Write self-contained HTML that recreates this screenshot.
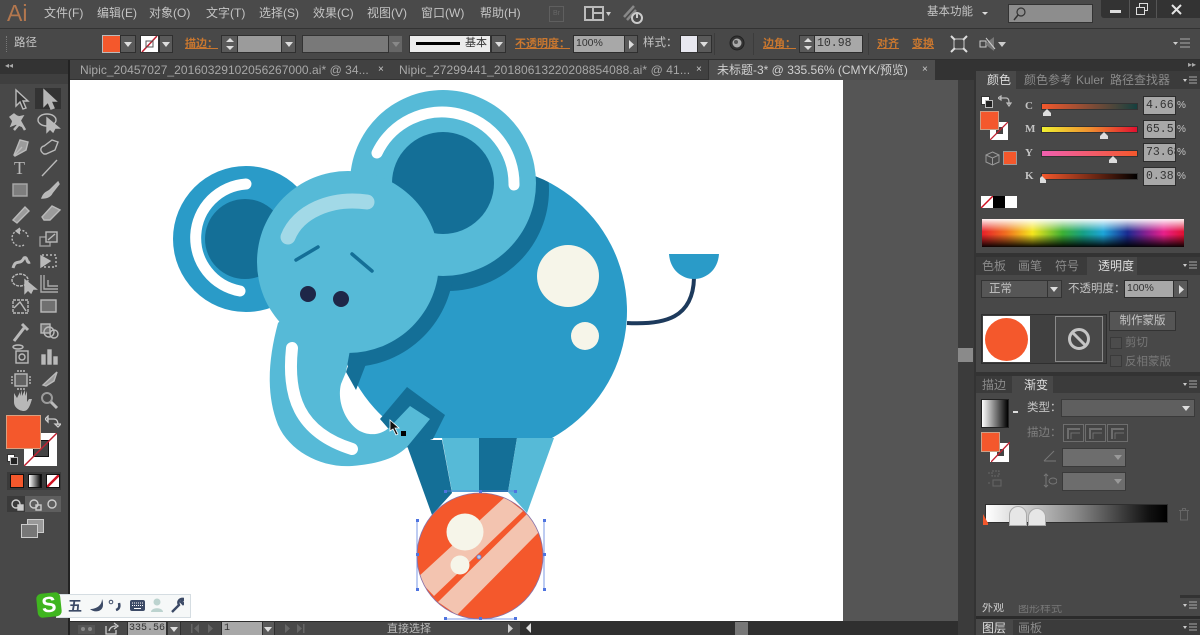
<!DOCTYPE html>
<html lang="zh"><head><meta charset="utf-8"><title>Illustrator</title>
<style>
html,body{margin:0;padding:0;background:#484848}
#p{position:relative;width:1200px;height:635px;overflow:hidden;background:#484848;font-family:"Liberation Sans","Noto Sans CJK SC",sans-serif;color:#c4c4c4;font-size:12px}
#p div,#p span.a,#p svg.a{position:absolute}
.t{white-space:nowrap;line-height:16px}
.o{color:#c9772f;text-decoration:underline;font-weight:bold;font-size:11px}
.f{background:#9b9b9b;box-shadow:0 0 0 1px #2f2f2f}
.b{background:#5a5a5a;box-shadow:0 0 0 1px #2f2f2f}
.n{font-family:"Liberation Mono",monospace;font-size:11.5px;color:#333;background:#a8a8a8;box-shadow:0 0 0 1px #2d2d2d;padding-left:2px;box-sizing:border-box;line-height:17px}
.ar{width:0;height:0;border-left:4px solid transparent;border-right:4px solid transparent;border-top:5px solid #ddd}
</style></head><body><div id="p">

<!-- menu bar -->
<div style="left:0;top:0;width:1200px;height:28px;background:#4a4a4a"></div>
<div style="left:0;top:28px;width:1200px;height:1px;background:#333"></div>
<div class="t" style="left:7px;top:-1px;font-size:23px;line-height:28px;color:#b3774e">Ai</div>
<div class="t" style="left:44px;top:5px">文件(F)</div>
<div class="t" style="left:97px;top:5px">编辑(E)</div>
<div class="t" style="left:149px;top:5px">对象(O)</div>
<div class="t" style="left:206px;top:5px">文字(T)</div>
<div class="t" style="left:259px;top:5px">选择(S)</div>
<div class="t" style="left:313px;top:5px">效果(C)</div>
<div class="t" style="left:367px;top:5px">视图(V)</div>
<div class="t" style="left:421px;top:5px">窗口(W)</div>
<div class="t" style="left:480px;top:5px">帮助(H)</div>
<div style="left:549px;top:6px;width:15px;height:16px;border:1px solid #5f5f5f;box-sizing:border-box;font-size:7px;color:#666;text-align:center;line-height:14px">Br</div>
<svg class="a" style="left:582px;top:4px" width="30" height="20"><rect x="2" y="2" width="20" height="15" fill="#bbb"/><rect x="4" y="4" width="6" height="11" fill="#444"/><rect x="12" y="4" width="8" height="4" fill="#444"/><rect x="12" y="10" width="8" height="5" fill="#444"/><path d="M24 8h5l-2.500 4z" fill="#ccc"/></svg>
<svg class="a" style="left:622px;top:3px" width="24" height="22"><path d="M2 14L12 3M5 17L14 7" stroke="#888" stroke-width="2.500"/><circle cx="15" cy="15" r="5" fill="none" stroke="#ccc" stroke-width="2"/><path d="M15 9v6" stroke="#ccc" stroke-width="2"/></svg>
<div class="t" style="left:927px;top:4px;font-size:11.500px">基本功能</div>
<div class="ar" style="left:982px;top:12px;border-width:3px;border-top-width:3px"></div>
<div style="left:1009px;top:5px;width:83px;height:17px;background:#8d8d8d;box-shadow:0 0 0 1px #333"></div>
<svg class="a" style="left:1012px;top:6px" width="16" height="16"><circle cx="9" cy="6" r="4" fill="none" stroke="#333" stroke-width="1.200"/><path d="M6 9L2 14" stroke="#333" stroke-width="1.500"/></svg>
<div style="left:1101px;top:0;width:99px;height:18px;background:#333;border-radius:0 0 0 3px"></div>
<div style="left:1129px;top:0;width:1px;height:18px;background:#555"></div><div style="left:1156px;top:0;width:1px;height:18px;background:#555"></div>
<div style="left:1110px;top:10px;width:11px;height:3px;background:#ddd"></div>
<svg class="a" style="left:1135px;top:3px" width="14" height="13"><rect x="4.500" y=".5" width="8" height="7" fill="none" stroke="#ddd"/><rect x="1.500" y="4.500" width="8" height="7" fill="#333" stroke="#ddd"/></svg>
<svg class="a" style="left:1170px;top:3px" width="13" height="13"><path d="M2 2L11 11M11 2L2 11" stroke="#e4e4e4" stroke-width="2"/></svg>

<!-- control bar -->
<div style="left:0;top:29px;width:1200px;height:30px;background:#484848"></div>
<div style="left:0;top:59px;width:1200px;height:1px;background:#2f2f2f"></div>
<div style="left:6px;top:36px;width:1px;height:16px;border-left:1px dotted #777"></div>
<div class="t" style="left:14px;top:35px;font-size:11.500px">路径</div>
<div style="left:103px;top:36px;width:17px;height:16px;background:#f4582c;box-shadow:0 0 0 1px #bbb"></div>
<div class="b" style="left:121px;top:36px;width:14px;height:16px"></div><div class="ar" style="left:124px;top:42px"></div>
<div style="left:141px;top:36px;width:17px;height:16px;background:#fff;box-shadow:0 0 0 1px #333"></div>
<svg class="a" style="left:141px;top:36px" width="17" height="16"><path d="M1 16L16 0" stroke="#c02030" stroke-width="1.500"/><rect x="5" y="5" width="7" height="6" fill="none" stroke="#555"/></svg>
<div class="b" style="left:160px;top:36px;width:12px;height:16px"></div><div class="ar" style="left:162px;top:42px"></div>
<div class="t o" style="left:185px;top:36px">描边：</div>
<div class="b" style="left:222px;top:36px;width:16px;height:16px"></div>
<svg class="a" style="left:225px;top:37px" width="10" height="14"><path d="M1 5L5 1L9 5zM1 9L5 13L9 9z" fill="#ddd"/></svg>
<div class="f" style="left:238px;top:36px;width:43px;height:16px"></div>
<div class="b" style="left:282px;top:36px;width:13px;height:16px"></div><div class="ar" style="left:285px;top:42px"></div>
<div style="left:303px;top:36px;width:85px;height:16px;background:#797979;box-shadow:0 0 0 1px #333"></div>
<div style="left:389px;top:36px;width:13px;height:16px;background:#666"></div><div class="ar" style="left:392px;top:42px;border-top-color:#888"></div>
<div style="left:410px;top:36px;width:80px;height:16px;background:#ececec;box-shadow:0 0 0 1px #333"></div>
<div style="left:416px;top:42px;width:44px;height:3px;background:#000"></div>
<div class="t" style="left:465px;top:35px;color:#333;font-size:11px">基本</div>
<div class="b" style="left:492px;top:36px;width:13px;height:16px"></div><div class="ar" style="left:495px;top:42px"></div>
<div class="t o" style="left:515px;top:36px">不透明度：</div>
<div class="n" style="left:574px;top:36px;width:50px;height:16px;font-family:'Liberation Sans',sans-serif;font-size:10.500px;line-height:15px">100%</div>
<div class="b" style="left:625px;top:36px;width:12px;height:16px"></div>
<svg class="a" style="left:628px;top:40px" width="7" height="9"><path d="M1 0L6 4.500L1 9z" fill="#ddd"/></svg>
<div class="t" style="left:643px;top:35px;font-size:11.500px">样式：</div>
<div style="left:681px;top:36px;width:16px;height:16px;background:#e8e8f0;box-shadow:0 0 0 1px #333"></div>
<div class="b" style="left:698px;top:36px;width:13px;height:16px"></div><div class="ar" style="left:700px;top:42px"></div>
<div style="left:714px;top:33px;width:1px;height:22px;background:#3c3c3c"></div>
<svg class="a" style="left:729px;top:35px" width="17" height="17"><circle cx="8" cy="8" r="7" fill="#333" stroke="#222"/><circle cx="8" cy="8" r="4.500" fill="#aaa"/><circle cx="7" cy="7" r="2" fill="#555"/></svg>
<div style="left:753px;top:33px;width:1px;height:22px;background:#3c3c3c"></div>
<div class="t o" style="left:763px;top:36px">边角：</div>
<div class="b" style="left:800px;top:36px;width:15px;height:16px"></div>
<svg class="a" style="left:803px;top:37px" width="10" height="14"><path d="M1 5L5 1L9 5zM1 9L5 13L9 9z" fill="#ddd"/></svg>
<div class="n" style="left:815px;top:36px;width:47px;height:16px;line-height:15px">10.98</div>
<div style="left:868px;top:33px;width:1px;height:22px;background:#3c3c3c"></div>
<div class="t o" style="left:877px;top:36px">对齐</div>
<div class="t o" style="left:912px;top:36px">变换</div>
<svg class="a" style="left:950px;top:35px" width="18" height="18"><rect x="4" y="4" width="10" height="10" fill="none" stroke="#ccc"/><path d="M1 1L5 5M17 1L13 5M1 17L5 13M17 17L13 13" stroke="#ddd" stroke-width="2"/></svg>
<svg class="a" style="left:979px;top:35px" width="28" height="18"><rect x="1" y="6" width="6" height="6" fill="none" stroke="#ccc"/><path d="M7 8L15 2V16L7 10z" fill="#777"/><path d="M7 3L16 14" stroke="#ccc"/><path d="M19 7h8l-4 5z" fill="#ccc"/></svg>
<svg class="a" style="left:1172px;top:37px" width="22" height="13"><path d="M1 5h5l-2.500 3z" fill="#ccc"/><path d="M8 2h10M8 6h10M8 10h10" stroke="#aaa"/></svg>

<!-- tabs -->
<div style="left:0;top:60px;width:1200px;height:20px;background:#333"></div>
<div style="left:70px;top:60px;width:322px;height:19px;background:#414141"></div>
<div style="left:392px;top:60px;width:316px;height:19px;background:#414141"></div>
<div style="left:709px;top:60px;width:226px;height:20px;background:#4e4e4e"></div>
<div class="t" style="left:80px;top:62px;color:#a8a8a8;font-size:12px;letter-spacing:.05px">Nipic_20457027_20160329102056267000.ai* @ 34...</div>
<div class="t" style="left:378px;top:62px;color:#ccc;font-size:10px">×</div>
<div class="t" style="left:399px;top:62px;color:#a8a8a8;font-size:12px;letter-spacing:.1px">Nipic_27299441_20180613220208854088.ai* @ 41...</div>
<div class="t" style="left:696px;top:62px;color:#ccc;font-size:10px">×</div>
<div class="t" style="left:717px;top:62px;color:#d0d0d0;font-size:12px">未标题-3* @ 335.56% (CMYK/预览)</div>
<div class="t" style="left:922px;top:62px;color:#ccc;font-size:10px">×</div>

<!-- canvas -->
<div style="left:70px;top:80px;width:888px;height:541px;background:#555"></div>
<div style="left:70px;top:80px;width:773px;height:541px;background:#fff"></div>
<div style="left:958px;top:80px;width:16px;height:541px;background:#3b3b3b"></div>
<div style="left:958px;top:348px;width:15px;height:14px;background:#8a8a8a"></div>
<svg class="a" style="left:70px;top:80px;overflow:hidden" width="773" height="541" viewBox="70 80 773 541">
<defs><clipPath id="ball"><circle cx="480" cy="556" r="63"/></clipPath>
<clipPath id="bodyc"><path d="M552 438A145 145 0 1 0 412 438z"/></clipPath></defs>
<!-- legs -->
<path d="M405 440H442L452 493L432 515z" fill="#146f97"/>
<path d="M442 438H479V492H452z" fill="#56bad7"/>
<path d="M479 438H517L508 492H479z" fill="#146f97"/>
<path d="M517 438H554L527 513L508 492z" fill="#56bad7"/>
<!-- tail -->
<path d="M627 323C665 325 693 318 694 278" fill="none" stroke="#1d3a5c" stroke-width="4"/>
<path d="M669 254H719C718 270 706 279 694 279C682 279 670 270 669 254z" fill="#2a9bc8"/>
<!-- left ear -->
<circle cx="246" cy="239" r="73" fill="#2a9bc8"/>
<circle cx="245" cy="239" r="40" fill="#146f97"/>
<path d="M246 184A54 54 0 0 0 240 291" fill="none" stroke="#fff" stroke-width="11" stroke-linecap="round"/>
<!-- body -->
<path d="M552 438A145 145 0 1 0 412 438z" fill="#2a9bc8"/>
<path d="M412 438L433 438L445 415L420 400z" fill="#2a9bc8"/>
<!-- dark shadow, only inside the body -->
<g clip-path="url(#bodyc)">
<circle cx="448" cy="190" r="101" fill="#146f97"/>
<circle cx="350" cy="263" r="104" fill="#146f97"/>
</g>
<path d="M346 372L352 354L366 364L356 390z" fill="#146f97"/>
<circle cx="568" cy="276" r="31" fill="#f6f5e9"/>
<circle cx="585" cy="336" r="14" fill="#f6f5e9"/>
<!-- arm dark -->
<path d="M380 419L407 387L445 415L433 439L405 448z" fill="#146f97"/>
<!-- big ear -->
<circle cx="443" cy="183" r="93" fill="#56bad7"/>
<circle cx="443" cy="183" r="51" fill="#146f97"/>
<path d="M377 153A72 72 0 0 1 514 185" fill="none" stroke="#fff" stroke-width="11" stroke-linecap="round"/>
<!-- head -->
<circle cx="348" cy="262" r="91" fill="#56bad7"/>
<!-- trunk -->
<path d="M278 323C268 360 266 395 278 425C290 452 322 468 352 466C378 464 396 458 407 447L430 419L410 406L390 427C380 436 368 436 358 430C344 420 337 400 341 384L346 372L350 350L300 300z" fill="#56bad7"/>
<path d="M292 348C287 395 298 432 352 449" fill="none" stroke="#fff" stroke-width="12" stroke-linecap="round"/>
<!-- face -->
<path d="M288 237C298 212 330 197 367 202" fill="none" stroke="#a2d9e7" stroke-width="15" stroke-linecap="round"/>
<path d="M296 260L318 247M352 254L372 271" fill="none" stroke="#146f97" stroke-width="3.500" stroke-linecap="round"/>
<circle cx="308" cy="294" r="8" fill="#1e2748"/>
<circle cx="341" cy="299" r="8" fill="#1e2748"/>
<!-- ball -->
<circle cx="480" cy="556" r="63" fill="#f4582c"/>
<g clip-path="url(#ball)"><path d="M505 497L523 511L434 596L417 578z" fill="#f3c4b0"/><path d="M527 514L540 531L457 615L438 602z" fill="#f3c4b0"/></g>
<circle cx="465" cy="532" r="18.500" fill="#f6f5e9"/>
<circle cx="460" cy="565" r="9.500" fill="#f6f5e9"/>
<circle cx="480" cy="556" r="63" fill="none" stroke="#8a72a8" stroke-width=".8"/>
<!-- selection -->
<g stroke="#5b7fe0" fill="none" stroke-width=".8"><path d="M445 491H516M445 619H516M417 520V590M544 520V590"/></g>
<g fill="#4f74e0"><rect x="444" y="490" width="3" height="3"/><rect x="479" y="490" width="3" height="3"/><rect x="514" y="490" width="3" height="3"/><rect x="416" y="519" width="3" height="3"/><rect x="416" y="553" width="3" height="3"/><rect x="416" y="588" width="3" height="3"/><rect x="543" y="519" width="3" height="3"/><rect x="543" y="553" width="3" height="3"/><rect x="543" y="588" width="3" height="3"/><rect x="444" y="617" width="3" height="3"/><rect x="479" y="617" width="3" height="3"/><rect x="514" y="617" width="3" height="3"/></g>
<circle cx="479" cy="557" r="2" fill="#b8c8e8" stroke="#5b7fe0" stroke-width=".8"/>
<!-- cursor -->
<path d="M390 420V431L393 429L396 435L398 434L395 428L399 428z" fill="#111" stroke="#fff" stroke-width=".8"/>
<rect x="401" y="431" width="5" height="5" fill="#000"/>
</svg>

<!-- tools -->
<div style="left:0;top:60px;width:69px;height:575px;background:#484848"></div>
<div style="left:68px;top:60px;width:2px;height:575px;background:#222"></div>
<div style="left:0;top:60px;width:68px;height:14px;background:#333"></div>
<div class="t" style="left:5px;top:60px;font-size:8px;line-height:12px;color:#aaa">◂◂</div>
<div style="left:0;top:74px;width:68px;height:10px;background:#3f3f3f"></div>
<div style="left:35px;top:88px;width:26px;height:21px;background:#333"></div>
<svg class="a" style="left:0;top:80px;opacity:.85" width="68" height="450" fill="none" stroke="#cfcfcf" stroke-width="1.400">
<path d="M16 10V26L20 22L23 29L26 28L23 21H28z" fill="#333"/>
<path d="M44 10V26L48 22L51 29L54 28L51 21H56z" fill="#ccc"/>
<path d="M17 36L25 50M12 40L20 43L14 50" stroke-width="2.500"/><path d="M14 34l4 3l5-1l-3 5l1 5l-5-2l-5 2l2-5l-3-4z" fill="#ccc"/>
<ellipse cx="47" cy="40" rx="9" ry="6"/><path d="M47 38V52L50 49L53 52L55 48H59z" fill="#ccc"/>
<path d="M14 75L20 60L28 62L26 70L15 76z" fill="#aaa"/><path d="M14 76L22 67"/>
<path d="M44 74C38 70 42 66 44 66L52 60L58 62L55 70L46 74z"/>
<text x="14" y="94" font-family="Liberation Serif" font-size="18" fill="#ccc" stroke="none">T</text>
<path d="M42 96L57 80"/>
<rect x="13" y="104" width="14" height="12" fill="#888" stroke="#bbb"/>
<path d="M42 118C44 112 48 112 50 110L58 102L59 104L52 113C50 117 46 118 42 118z" fill="#ccc"/>
<path d="M13 140L25 127L29 131L17 143z" fill="#aaa"/>
<path d="M42 137L52 126L60 130L50 140H44z" fill="#aaa"/>
<path d="M28 157A8 8 0 1 0 24 165" stroke-dasharray="2 1.500"/><path d="M20 148L16 151L20 154" fill="#ccc"/>
<rect x="40" y="157" width="10" height="9" stroke="#aaa"/><rect x="46" y="152" width="11" height="10" fill="#555"/><path d="M48 160L55 154"/>
<path d="M13 188C16 178 20 186 24 178C28 176 26 184 30 182" stroke-width="3"/>
<rect x="42" y="175" width="14" height="12" stroke-dasharray="2 2"/><path d="M41 176L50 181L41 187z" fill="#ccc"/>
<ellipse cx="20" cy="200" rx="8" ry="6" stroke-dasharray="3 1"/><path d="M25 200V213L28 210L31 213L33 209H36z" fill="#ccc"/>
<path d="M41 195V212H58M44 195V209H58M48 200V206H58" stroke="#bbb"/>
<rect x="13" y="220" width="15" height="13" stroke-dasharray="3 1"/><path d="M14 228L20 222L26 231" />
<rect x="41" y="220" width="15" height="12" fill="#777"/>
<path d="M14 261L24 248M22 244L28 250" stroke-width="3"/>
<rect x="41" y="244" width="9" height="9" fill="#777"/><circle cx="49" cy="252" r="5"/><circle cx="54" cy="254" r="4"/>
<rect x="16" y="271" width="12" height="12"/><circle cx="22" cy="277" r="3"/><ellipse cx="18" cy="267" rx="5" ry="2"/>
<rect x="42" y="275" width="3" height="9" fill="#ccc"/><rect x="48" y="270" width="3" height="14" fill="#ccc"/><rect x="54" y="277" width="3" height="7" fill="#ccc"/>
<rect x="15" y="294" width="12" height="12" fill="#666"/><path d="M12 296V304M30 296V304M17 291H25M17 309H25" stroke-dasharray="2 1"/>
<path d="M43 305L57 292L54 301L46 306z" fill="#aaa"/>
<path d="M14 313V322C14 328 20 331 24 331C28 331 30 326 32 319L29 319L27 322V311L25 316V310L22 316V310L20 316V312L17 318z" fill="#ccc" stroke="none"/>
<circle cx="47" cy="318" r="5" stroke="#aaa" stroke-width="2"/><path d="M51 322L57 328" stroke-width="3"/>
</svg>
<div style="left:7px;top:416px;width:33px;height:32px;background:#f4582c;box-shadow:0 0 0 1px #d9a080;z-index:2"></div>
<div style="left:24px;top:433px;width:33px;height:33px;background:#fff"></div>
<div style="left:34px;top:441px;width:14px;height:15px;background:#444;box-shadow:0 0 0 1px #111"></div>
<svg class="a" style="left:24px;top:433px;z-index:3" width="33" height="33"><path d="M0 33L33 0" stroke="#c02030" stroke-width="1.500"/></svg>
<svg class="a" style="left:45px;top:415px" width="16" height="14" fill="none" stroke="#ccc" stroke-width="1.300"><path d="M2 4H9C12 4 13 7 13 10M0 4l3-3v6zM10 9l3 3 3-3z"/></svg>
<div style="left:8px;top:455px;width:6px;height:6px;background:#fff;box-shadow:0 0 0 1px #333"></div><div style="left:11px;top:458px;width:6px;height:6px;background:#222;box-shadow:0 0 0 1px #bbb"></div>
<div style="left:7px;top:472px;width:54px;height:18px;background:#3a3a3a"></div>
<div style="left:11px;top:475px;width:12px;height:12px;background:#f4582c;box-shadow:0 0 0 1px #111"></div>
<div style="left:29px;top:475px;width:12px;height:12px;background:linear-gradient(90deg,#fff,#000);box-shadow:0 0 0 1px #111"></div>
<div style="left:47px;top:475px;width:12px;height:12px;background:#fff;box-shadow:0 0 0 1px #111"></div>
<svg class="a" style="left:47px;top:475px" width="12" height="12"><path d="M0 12L12 0" stroke="#d01020" stroke-width="2.500"/></svg>
<div style="left:7px;top:496px;width:54px;height:16px;background:#5e5e5e"></div><div style="left:7px;top:496px;width:18px;height:16px;background:#3a3a3a"></div>
<svg class="a" style="left:7px;top:496px" width="54" height="16" fill="none" stroke="#ccc" stroke-width="1.400"><circle cx="9" cy="8" r="4"/><rect x="11" y="9" width="5" height="5" fill="#ccc"/><circle cx="27" cy="8" r="4"/><rect x="29" y="9" width="5" height="5"/><circle cx="45" cy="8" r="4"/></svg>
<div style="left:28px;top:520px;width:15px;height:12px;background:#999;box-shadow:0 0 0 1px #ccc"></div>
<div style="left:22px;top:525px;width:15px;height:12px;background:#777;box-shadow:0 0 0 1px #ccc"></div>

<!-- status bar -->
<div style="left:70px;top:621px;width:450px;height:14px;background:#484848;border-top:1px solid #2a2a2a;box-sizing:border-box"></div>
<div style="left:520px;top:621px;width:438px;height:14px;background:#2f2f2f"></div>
<div style="left:958px;top:621px;width:16px;height:14px;background:#3b3b3b"></div>
<div style="left:735px;top:622px;width:13px;height:13px;background:#777"></div>
<svg class="a" style="left:77px;top:624px" width="20" height="11"><rect x="1" y="1" width="17" height="9" fill="#555"/><circle cx="6" cy="5" r="2" fill="#888"/><circle cx="13" cy="5" r="2" fill="#888"/></svg>
<svg class="a" style="left:105px;top:622px" width="14" height="13" fill="none" stroke="#ccc" stroke-width="1.300"><path d="M1 4V12H11V8M4 9C5 5 8 4 11 4M9 1L13 4L9 7"/></svg>
<div class="n" style="left:128px;top:622px;width:38px;height:13px;line-height:14px;font-size:10px;padding-left:1px;overflow:hidden">335.56</div>
<div class="b" style="left:168px;top:622px;width:12px;height:13px"></div><div class="ar" style="left:170px;top:627px"></div>
<svg class="a" style="left:190px;top:624px" width="28" height="9" fill="#666"><path d="M1 0h1.500v9H1zM4 4.500L9 0V9zM18 0L23 4.500L18 9z"/></svg>
<div class="n" style="left:222px;top:622px;width:40px;height:13px;line-height:14px;font-size:10px">1</div>
<div class="b" style="left:263px;top:622px;width:11px;height:13px"></div><div class="ar" style="left:264px;top:627px"></div>
<svg class="a" style="left:284px;top:624px" width="24" height="9" fill="#666"><path d="M1 0L6 4.500L1 9zM13 0L18 4.500L13 9zM19 0h1.500v9H19z"/></svg>
<div class="t" style="left:387px;top:621px;font-size:11px;color:#bbb">直接选择</div>
<svg class="a" style="left:507px;top:624px" width="7" height="9"><path d="M1 0L6 4.500L1 9z" fill="#ccc"/></svg>
<svg class="a" style="left:525px;top:623px" width="7" height="10"><path d="M6 0L1 5L6 10z" fill="#ddd"/></svg>

<!-- right panels -->
<div style="left:974px;top:60px;width:226px;height:575px;background:#333"></div>
<div style="left:976px;top:71px;width:224px;height:182px;background:#484848"></div>
<div style="left:976px;top:71px;width:224px;height:18px;background:#3b3b3b"></div>
<div style="left:976px;top:71px;width:40px;height:18px;background:#484848"></div>
<div class="t" style="left:987px;top:72px;color:#ddd">颜色</div>
<div class="t" style="left:1024px;top:72px;color:#8b8b8b">颜色参考</div>
<div class="t" style="left:1076px;top:72px;color:#8b8b8b">Kuler</div>
<div class="t" style="left:1110px;top:72px;color:#8b8b8b">路径查找器</div>
<svg class="a" style="left:1183px;top:76px" width="14" height="9"><path d="M0 3h4l-2 3z" fill="#ccc"/><path d="M6 1h8M6 4h8M6 7h8" stroke="#aaa"/></svg>
<div class="t" style="left:1188px;top:60px;font-size:8px;line-height:10px;color:#aaa">▸▸</div>
<div style="left:982px;top:97px;width:7px;height:7px;background:#fff;box-shadow:0 0 0 1px #333"></div><div style="left:986px;top:101px;width:6px;height:6px;background:#222;box-shadow:0 0 0 1px #bbb"></div>
<svg class="a" style="left:998px;top:95px" width="14" height="12" fill="none" stroke="#bbb" stroke-width="1.200"><path d="M2 3H8C11 3 11 6 11 9M0 3l3-2v4zM9 8l2 3 2-3z"/></svg>
<div style="left:990px;top:122px;width:18px;height:18px;background:#fff"></div><div style="left:996px;top:127px;width:7px;height:7px;background:#444"></div>
<svg class="a" style="left:990px;top:122px" width="18" height="18"><path d="M0 18L18 0" stroke="#c02030" stroke-width="1.300"/></svg>
<div style="left:981px;top:112px;width:17px;height:17px;background:#f4582c;box-shadow:0 0 0 1px #caa088"></div>
<svg class="a" style="left:985px;top:151px" width="15" height="15" fill="none" stroke="#999"><path d="M7.500 1L14 4V11L7.500 14L1 11V4zM1 4L7.500 7L14 4M7.500 7V14"/></svg>
<div style="left:1004px;top:152px;width:12px;height:12px;background:#f4582c;box-shadow:0 0 0 1px #999"></div>
<div class="t" style="left:1025px;top:98px;font-family:'Liberation Serif';font-weight:bold;font-size:11px">C</div>
<div class="t" style="left:1025px;top:121px;font-family:'Liberation Serif';font-weight:bold;font-size:11px">M</div>
<div class="t" style="left:1025px;top:145px;font-family:'Liberation Serif';font-weight:bold;font-size:11px">Y</div>
<div class="t" style="left:1025px;top:168px;font-family:'Liberation Serif';font-weight:bold;font-size:11px">K</div>
<div style="left:1042px;top:104px;width:95px;height:5px;background:linear-gradient(90deg,#f4582c,#15403f);box-shadow:0 0 0 1px #333"></div>
<div style="left:1042px;top:127px;width:95px;height:5px;background:linear-gradient(90deg,#f0f030,#f09030 50%,#e01030);box-shadow:0 0 0 1px #333"></div>
<div style="left:1042px;top:151px;width:95px;height:5px;background:linear-gradient(90deg,#f060b0,#f4582c);box-shadow:0 0 0 1px #333"></div>
<div style="left:1042px;top:174px;width:95px;height:5px;background:linear-gradient(90deg,#f4582c,#000);box-shadow:0 0 0 1px #333"></div>
<svg class="a" style="left:1040px;top:108px" width="90" height="76" fill="#ddd"><path d="M3 5L7 1L11 5V8H3z"/><path d="M60 28L64 24L68 28V31H60z"/><path d="M69 52L73 48L77 52V55H69z"/><path d="M-2 75L2 71L6 75V78H-2z" transform="translate(0 -3)"/></svg>
<div class="n" style="left:1144px;top:97px;width:31px;height:17px">4.66</div>
<div class="n" style="left:1144px;top:121px;width:31px;height:17px">65.5</div>
<div class="n" style="left:1144px;top:144px;width:31px;height:17px;overflow:hidden">73.68</div>
<div class="n" style="left:1144px;top:168px;width:31px;height:17px">0.38</div>
<div class="t" style="left:1177px;top:98px;font-size:10px">%</div><div class="t" style="left:1177px;top:122px;font-size:10px">%</div><div class="t" style="left:1177px;top:145px;font-size:10px">%</div><div class="t" style="left:1177px;top:169px;font-size:10px">%</div>
<div style="left:981px;top:196px;width:12px;height:12px;background:#fff"></div>
<svg class="a" style="left:981px;top:196px" width="12" height="12"><path d="M0 12L12 0" stroke="#d01020" stroke-width="1.500"/></svg>
<div style="left:993px;top:196px;width:12px;height:12px;background:#000"></div>
<div style="left:1005px;top:196px;width:12px;height:12px;background:#fff"></div>
<div style="left:982px;top:219px;width:202px;height:28px;background:linear-gradient(180deg,rgba(255,255,255,.95) 0,rgba(255,255,255,0) 45%,rgba(0,0,0,0) 55%,rgba(0,0,0,.95) 100%),linear-gradient(90deg,#e8202a 0,#f07020 12%,#f5e61e 25%,#3cb034 40%,#16a085 50%,#1da5d8 60%,#1a2a90 72%,#902090 82%,#e8208a 90%,#e01030 100%)"></div>

<div style="left:976px;top:257px;width:224px;height:115px;background:#484848"></div>
<div style="left:976px;top:257px;width:224px;height:18px;background:#3b3b3b"></div>
<div style="left:1087px;top:257px;width:50px;height:18px;background:#484848"></div>
<div class="t" style="left:982px;top:258px;color:#8b8b8b">色板</div>
<div class="t" style="left:1018px;top:258px;color:#8b8b8b">画笔</div>
<div class="t" style="left:1055px;top:258px;color:#8b8b8b">符号</div>
<div class="t" style="left:1098px;top:258px;color:#ddd">透明度</div>
<svg class="a" style="left:1183px;top:261px" width="14" height="9"><path d="M0 3h4l-2 3z" fill="#ccc"/><path d="M6 1h8M6 4h8M6 7h8" stroke="#aaa"/></svg>
<div style="left:982px;top:281px;width:79px;height:16px;background:#565656;box-shadow:0 0 0 1px #333"></div>
<div class="t" style="left:989px;top:281px;font-size:11.500px">正常</div>
<div style="left:1047px;top:281px;width:1px;height:16px;background:#333"></div><div class="ar" style="left:1050px;top:287px"></div>
<div class="t" style="left:1068px;top:281px;font-size:11.500px">不透明度：</div>
<div class="n" style="left:1125px;top:281px;width:48px;height:16px;font-family:'Liberation Sans',sans-serif;font-size:10.500px;line-height:15px">100%</div>
<div class="b" style="left:1174px;top:281px;width:13px;height:16px"></div>
<svg class="a" style="left:1178px;top:285px" width="7" height="9"><path d="M1 0L6 4.500L1 9z" fill="#ddd"/></svg>
<div style="left:982px;top:315px;width:124px;height:48px;background:#404040;box-shadow:0 0 0 1px #2f2f2f"></div>
<div style="left:983px;top:316px;width:47px;height:46px;background:#fff"></div>
<div style="left:985px;top:318px;width:43px;height:43px;border-radius:50%;background:#f4582c"></div>
<div style="left:1055px;top:316px;width:48px;height:46px;box-sizing:border-box;border:1px solid #8a8a8a;background:#484848"></div>
<svg class="a" style="left:1067px;top:327px" width="24" height="24"><circle cx="12" cy="12" r="9.500" fill="none" stroke="#c4c4c4" stroke-width="3"/><path d="M5 5L19 19" stroke="#c4c4c4" stroke-width="3"/></svg>
<div style="left:1110px;top:312px;width:65px;height:18px;background:#555;box-shadow:0 0 0 1px #333;text-align:center;line-height:18px;font-size:11.500px">制作蒙版</div>
<div style="left:1111px;top:338px;width:10px;height:10px;background:#4c4c4c;box-shadow:0 0 0 1px #3a3a3a"></div>
<div style="left:1111px;top:356px;width:10px;height:10px;background:#4c4c4c;box-shadow:0 0 0 1px #3a3a3a"></div>
<div class="t" style="left:1125px;top:335px;color:#777;font-size:11.500px">剪切</div>
<div class="t" style="left:1125px;top:354px;color:#777;font-size:11.500px">反相蒙版</div>

<div style="left:976px;top:376px;width:224px;height:244px;background:#484848"></div>
<div style="left:976px;top:376px;width:224px;height:17px;background:#3b3b3b"></div>
<div style="left:1012px;top:376px;width:41px;height:17px;background:#484848"></div>
<div class="t" style="left:982px;top:377px;color:#8b8b8b">描边</div>
<div class="t" style="left:1024px;top:377px;color:#ddd">渐变</div>
<svg class="a" style="left:1183px;top:380px" width="14" height="9"><path d="M0 3h4l-2 3z" fill="#ccc"/><path d="M6 1h8M6 4h8M6 7h8" stroke="#aaa"/></svg>
<div style="left:982px;top:400px;width:26px;height:27px;background:linear-gradient(90deg,#fff,#000);box-shadow:0 0 0 1px #222"></div>
<div style="left:1013px;top:411px;width:5px;height:2px;background:#ddd"></div>
<div class="t" style="left:1027px;top:400px;font-size:11.500px">类型：</div>
<div style="left:1062px;top:400px;width:132px;height:16px;background:#5f5f5f;box-shadow:0 0 0 1px #3a3a3a"></div><div class="ar" style="left:1182px;top:406px"></div>
<div class="t" style="left:1027px;top:425px;color:#7f7f7f;font-size:11.500px">描边：</div>
<svg class="a" style="left:1063px;top:424px" width="66" height="18" fill="none" stroke="#6e6e6e"><rect x=".5" y=".5" width="20" height="17" fill="#444"/><rect x="22.500" y=".5" width="20" height="17" fill="#444"/><rect x="44.500" y=".5" width="20" height="17" fill="#444"/><path d="M5 15V5H17M27 15V5H39M49 15V5H61" stroke-width="2"/><path d="M8 15V9H17M30 15V9H39M52 15V9H61"/></svg>
<svg class="a" style="left:1043px;top:449px" width="14" height="42" fill="none" stroke="#777"><path d="M1 12L11 2M1 12H13"/><path d="M3 25V38M1 27L3 25L5 27M1 36L3 38L5 36"/><ellipse cx="10" cy="32" rx="4" ry="3"/></svg>
<div style="left:1063px;top:449px;width:62px;height:17px;background:#6d6d6d;box-shadow:0 0 0 1px #3a3a3a"></div><div class="ar" style="left:1114px;top:455px;border-top-color:#999"></div>
<div style="left:1063px;top:473px;width:62px;height:17px;background:#6d6d6d;box-shadow:0 0 0 1px #3a3a3a"></div><div class="ar" style="left:1114px;top:479px;border-top-color:#999"></div>
<svg class="a" style="left:987px;top:470px" width="16" height="18" fill="none" stroke="#666"><rect x="5" y="1" width="7" height="5" stroke-dasharray="2 1"/><rect x="6" y="10" width="8" height="6"/><path d="M1 3h2M1 13h2"/></svg>
<div style="left:986px;top:505px;width:181px;height:17px;background:linear-gradient(90deg,#fff 0,#ddd 15%,#888 50%,#111 90%,#000 100%);box-shadow:0 0 0 1px #2f2f2f"></div>
<div style="left:1010px;top:507px;width:16px;height:18px;background:#e6e6e6;border-radius:8px 8px 0 0;box-shadow:0 0 0 1px #aaa"></div>
<div style="left:1029px;top:509px;width:16px;height:16px;background:#e6e6e6;border-radius:8px 8px 0 0;box-shadow:0 0 0 1px #aaa"></div>
<svg class="a" style="left:982px;top:514px" width="7" height="11"><path d="M1 0L6 9V11H1z" fill="#f4582c"/></svg>
<svg class="a" style="left:1179px;top:508px" width="11" height="13" fill="none" stroke="#666"><path d="M0 2.500H10M3.500 2.500V.5H6.500V2.500M1.500 3V12H8.500V3"/></svg>
<div style="left:990px;top:443px;width:19px;height:19px;background:#fff"></div>
<div style="left:997px;top:449px;width:7px;height:7px;background:#444"></div>
<svg class="a" style="left:991px;top:442px" width="19" height="20"><path d="M0 20L19 0" stroke="#c02030" stroke-width="1.300"/></svg>
<div style="left:982px;top:433px;width:17px;height:18px;background:#f4582c;box-shadow:0 0 0 1px #caa088"></div>

<div style="left:976px;top:598px;width:224px;height:18px;background:#484848"></div>
<div style="left:1180px;top:595px;width:20px;height:3px;background:#333"></div>
<div class="t" style="left:982px;top:603px;font-size:11px;height:10px;overflow:hidden;line-height:10px;color:#ccc">外观</div>
<div class="t" style="left:1018px;top:605px;font-size:11px;height:8px;overflow:hidden;line-height:8px;color:#777">图形样式</div>
<svg class="a" style="left:1183px;top:601px" width="14" height="9"><path d="M0 3h4l-2 3z" fill="#ccc"/><path d="M6 1h8M6 4h8M6 7h8" stroke="#aaa"/></svg>
<div style="left:976px;top:616px;width:224px;height:3px;background:#2b2b2b"></div>
<div style="left:976px;top:620px;width:224px;height:15px;background:#3b3b3b"></div>
<div style="left:976px;top:620px;width:37px;height:15px;background:#484848"></div>
<div class="t" style="left:982px;top:620px;color:#ddd">图层</div>
<div class="t" style="left:1018px;top:620px;color:#8b8b8b">画板</div>
<svg class="a" style="left:1183px;top:623px" width="14" height="9"><path d="M0 3h4l-2 3z" fill="#ccc"/><path d="M6 1h8M6 4h8M6 7h8" stroke="#aaa"/></svg>

<!-- IME -->
<div style="left:57px;top:595px;width:133px;height:22px;background:#f6f8f8;box-shadow:0 0 0 1px #d5dde2"></div>
<div style="left:37px;top:593px;width:24px;height:24px;background:#3fb51f;border-radius:5px;transform:rotate(-6deg);color:#fff;font:bold 22px/23px 'Liberation Sans',sans-serif;text-align:center">S</div>
<div class="t" style="left:68px;top:597px;font-size:14px;line-height:18px;color:#3c4a66;font-weight:bold">五</div>
<svg class="a" style="left:88px;top:597px" width="96" height="18"><path d="M14 2C14 8 9 12 2 12C6 16 15 15 15 8C15 6 15 4 14 2z" fill="#3c4a66"/><circle cx="23" cy="5" r="1.800" fill="none" stroke="#3c4a66"/><path d="M31 6C32 10 31 12 28 13" stroke="#3c4a66" stroke-width="2.500" fill="none"/><rect x="42" y="3" width="15" height="11" rx="2" fill="#3c4a66"/><path d="M44 6h11M44 8.500h11" stroke="#fff" stroke-dasharray="1 1"/><path d="M46 11.500h7" stroke="#fff"/><circle cx="69" cy="5" r="3.500" fill="#bcd3cf"/><path d="M63 15C63 10 75 10 75 15z" fill="#bcd3cf"/><path d="M84 15L91 8C89 4 92 1 96 2L93 5L95 7L98 4" stroke="#3c4a66" stroke-width="2.400" fill="none"/></svg>
</div></body></html>
